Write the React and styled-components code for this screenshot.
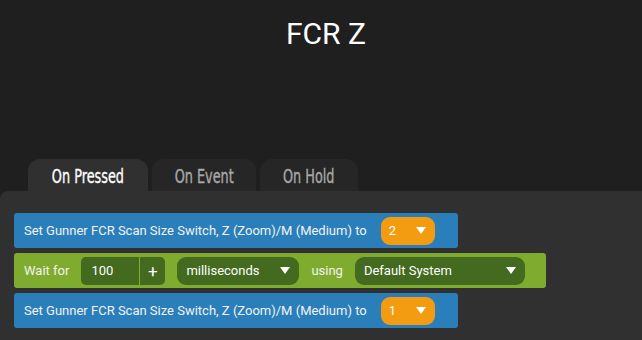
import React from "react";
import styled, {createGlobalStyle} from "styled-components";

const GlobalStyle = createGlobalStyle`
    html, body {
        margin: 0;
        padding: 0;
        background-color: #1f1f1f;
    }
    body {
        width: 642px;
        height: 340px;
        overflow: hidden;
        font-family: Roboto, "Liberation Sans", sans-serif;
    }
`;

const Page = styled.div`
    display: flex;
    flex-direction: column;
    width: 642px;
    height: 340px;
    background-color: #1f1f1f;
`;

const Title = styled.h1`
    margin: 0;
    padding: 14px 0 0 10px;
    height: 159px;
    box-sizing: border-box;
    text-align: center;
    font-family: Roboto, sans-serif;
    font-weight: 400;
    font-size: 30px;
    line-height: 40px;
    color: #ffffff;
`;

const Tabs = styled.div`
    display: flex;
    gap: 4px;
    padding-left: 28px;
    height: 32px;
`;

const Tab = styled.div`
    display: flex;
    align-items: center;
    justify-content: center;
    width: ${p => p.width}px;
    padding-top: 1px;
    box-sizing: border-box;
    border-radius: 12px 12px 0 0;
    background-color: ${p => p.active ? '#303030' : '#262626'};
    color: ${p => p.active ? '#ffffff' : '#a9a9a9'};
`;

const TabText = styled.span`
    display: inline-block;
    font-family: "DejaVu Sans Condensed", "DejaVu Sans", sans-serif;
    font-stretch: condensed;
    font-weight: 400;
    font-size: 17px;
    transform: scale(0.84, 1.18);
    white-space: nowrap;
    -webkit-text-stroke: 0.3px currentColor;
`;

const Panel = styled.div`
    flex: 1;
    display: flex;
    flex-direction: column;
    align-items: flex-start;
    gap: 5px;
    padding: 22px 14px 0;
    border-radius: 8px 0 0 0;
    background-color: #303030;
`;

const Block = styled.div`
    display: flex;
    align-items: center;
    gap: ${p => p.gap || 12}px;
    height: 35px;
    padding: 0 ${p => p.padRight}px 0 10px;
    border-radius: 3px;
    background-color: ${p => p.color};
    color: #f2f2f2;
    font-size: 13px;
`;

const Label = styled.span`
    white-space: nowrap;
`;

const Select = styled.div`
    display: flex;
    align-items: center;
    justify-content: space-between;
    box-sizing: border-box;
    width: ${p => p.width}px;
    height: 28px;
    padding: 0 9px 0 ${p => p.padLeft || 9}px;
    border-radius: 9px;
    background-color: ${p => p.color};
    color: #ffffff;
    font-size: 13px;
`;

const Arrow = styled.span`
    width: 0;
    height: 0;
    border-left: 5px solid transparent;
    border-right: 5px solid transparent;
    border-top: 7px solid #ffffff;
`;

const NumberBox = styled.div`
    display: flex;
    height: 28px;
    border-radius: 5px;
    overflow: hidden;
    background-color: #436a1f;
    color: #ffffff;
    font-size: 13px;
`;

const NumberValue = styled.div`
    display: flex;
    align-items: center;
    width: 48px;
    padding-left: 10px;
    border-right: 1px solid #7fac2f;
`;

const Plus = styled.div`
    display: flex;
    align-items: center;
    justify-content: center;
    width: 25px;
    font-size: 17px;
`;

const BLUE = '#2a7fba';
const GREEN = '#7fac2f';
const DARK_GREEN = '#436a1f';
const ORANGE = '#f39c12';

const SetBlock = ({value}) => (
    <Block color={BLUE} gap={14} padRight={23}>
        <Label>Set Gunner FCR Scan Size Switch, Z (Zoom)/M (Medium) to</Label>
        <Select color={ORANGE} width={54} padLeft={8}>
            {value}
            <Arrow/>
        </Select>
    </Block>
);

export default function App() {
    return (
        <Page>
            <GlobalStyle/>
            <Title>FCR Z</Title>
            <Tabs>
                <Tab active width={120}><TabText>On Pressed</TabText></Tab>
                <Tab width={104}><TabText>On Event</TabText></Tab>
                <Tab width={98}><TabText>On Hold</TabText></Tab>
            </Tabs>
            <Panel>
                <SetBlock value="2"/>
                <Block color={GREEN} gap={12} padRight={21}>
                    <Label>Wait for</Label>
                    <NumberBox>
                        <NumberValue>100</NumberValue>
                        <Plus>+</Plus>
                    </NumberBox>
                    <Select color={DARK_GREEN} width={122}>
                        milliseconds
                        <Arrow/>
                    </Select>
                    <Label>using</Label>
                    <Select color={DARK_GREEN} width={170}>
                        Default System
                        <Arrow/>
                    </Select>
                </Block>
                <SetBlock value="1"/>
            </Panel>
        </Page>
    );
}
